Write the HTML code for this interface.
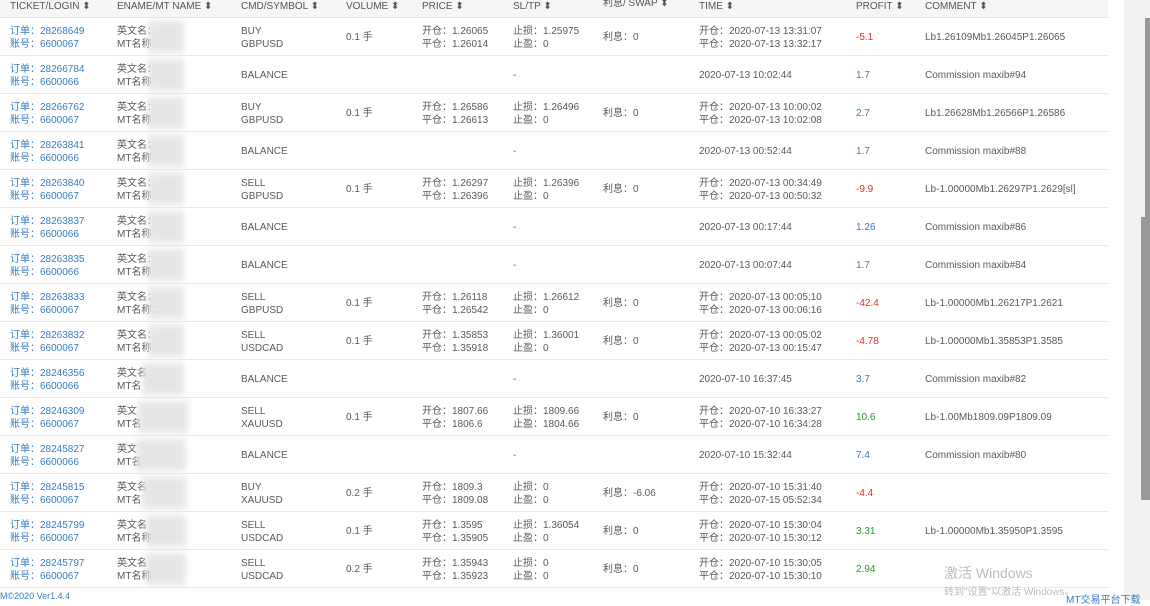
<!DOCTYPE html>
<html><head><meta charset="utf-8"><style>
*{margin:0;padding:0;box-sizing:border-box}
body{width:1150px;height:600px;overflow:hidden;background:#fff;font-family:"Liberation Sans","Noto Sans CJK SC",sans-serif;font-size:10px;color:#5a5a5a;position:relative}
.side{position:absolute;left:1124px;top:0;width:26px;height:600px;background:#f2f2f2}
.sb1{position:absolute;left:1145px;top:18px;width:5px;height:200px;background:#999}
.sb2{position:absolute;left:1141px;top:217px;width:9px;height:283px;background:#999}
.hdr{position:absolute;left:0;top:0;width:1108px;height:18px;background:#f6f6f6;border-bottom:1px solid #e6e6e6}
.hdr span{position:absolute;top:1px;font-size:10px;color:#555;white-space:nowrap}
.row{position:absolute;left:0;width:1108px;height:38px;border-bottom:1px solid #e8e8e8}
.c{position:absolute;top:7px;line-height:13px;white-space:nowrap}
.m{top:13px}
.b{color:#3a7cc0}.r{color:#e03030}.g{color:#22a022}
.blur{position:absolute;left:148px;top:3px;width:36px;height:32px;background:#e2e2e2;filter:blur(3px);opacity:.85}
.c1{left:10px}.c2{left:117px}.c3{left:241px}.c4{left:346px}.c5{left:422px}.c6{left:513px}.c7{left:603px}.c8{left:699px}.c9{left:856px}.c10{left:925px}
</style></head><body>
<div class="side"></div><div class="sb1"></div><div class="sb2"></div>
<div class="hdr">
<span style="left:10px">TICKET/LOGIN ⬍</span><span style="left:117px">ENAME/MT NAME ⬍</span><span style="left:241px">CMD/SYMBOL ⬍</span><span style="left:346px">VOLUME ⬍</span><span style="left:422px">PRICE ⬍</span><span style="left:513px">SL/TP ⬍</span><span style="left:603px;top:-6px">利息/ SWAP ⬍</span><span style="left:699px">TIME ⬍</span><span style="left:856px">PROFIT ⬍</span><span style="left:925px">COMMENT ⬍</span>
</div>

<div class="row" style="top:18px"><div class="c c1 b">订单：28268649<br>账号：6600067</div><div class="c c2">英文名：<br>MT名称</div><div class="blur"></div><div class="c c3">BUY<br>GBPUSD</div><div class="c c4 m">0.1 手</div><div class="c c5">开仓：1.26065<br>平仓：1.26014</div><div class="c c6">止损：1.25975<br>止盈：0</div><div class="c c7 m">利息：0</div><div class="c c8">开仓：2020-07-13 13:31:07<br>平仓：2020-07-13 13:32:17</div><div class="c c9 m r">-5.1</div><div class="c c10 m">Lb1.26109Mb1.26045P1.26065</div></div>

<div class="row" style="top:56px"><div class="c c1 b">订单：28266784<br>账号：6600066</div><div class="c c2">英文名：<br>MT名称</div><div class="blur"></div><div class="c c3 m">BALANCE</div><div class="c c6 m">-</div><div class="c c8 m">2020-07-13 10:02:44</div><div class="c c9 m b">1.7</div><div class="c c10 m">Commission maxib#94</div></div>

<div class="row" style="top:94px"><div class="c c1 b">订单：28266762<br>账号：6600067</div><div class="c c2">英文名：<br>MT名称</div><div class="blur"></div><div class="c c3">BUY<br>GBPUSD</div><div class="c c4 m">0.1 手</div><div class="c c5">开仓：1.26586<br>平仓：1.26613</div><div class="c c6">止损：1.26496<br>止盈：0</div><div class="c c7 m">利息：0</div><div class="c c8">开仓：2020-07-13 10:00:02<br>平仓：2020-07-13 10:02:08</div><div class="c c9 m g">2.7</div><div class="c c10 m">Lb1.26628Mb1.26566P1.26586</div></div>

<div class="row" style="top:132px"><div class="c c1 b">订单：28263841<br>账号：6600066</div><div class="c c2">英文名：<br>MT名称</div><div class="blur"></div><div class="c c3 m">BALANCE</div><div class="c c6 m">-</div><div class="c c8 m">2020-07-13 00:52:44</div><div class="c c9 m b">1.7</div><div class="c c10 m">Commission maxib#88</div></div>

<div class="row" style="top:170px"><div class="c c1 b">订单：28263840<br>账号：6600067</div><div class="c c2">英文名：<br>MT名称</div><div class="blur"></div><div class="c c3">SELL<br>GBPUSD</div><div class="c c4 m">0.1 手</div><div class="c c5">开仓：1.26297<br>平仓：1.26396</div><div class="c c6">止损：1.26396<br>止盈：0</div><div class="c c7 m">利息：0</div><div class="c c8">开仓：2020-07-13 00:34:49<br>平仓：2020-07-13 00:50:32</div><div class="c c9 m r">-9.9</div><div class="c c10 m">Lb-1.00000Mb1.26297P1.2629[sl]</div></div>

<div class="row" style="top:208px"><div class="c c1 b">订单：28263837<br>账号：6600066</div><div class="c c2">英文名：<br>MT名称</div><div class="blur"></div><div class="c c3 m">BALANCE</div><div class="c c6 m">-</div><div class="c c8 m">2020-07-13 00:17:44</div><div class="c c9 m b">1.26</div><div class="c c10 m">Commission maxib#86</div></div>

<div class="row" style="top:246px"><div class="c c1 b">订单：28263835<br>账号：6600066</div><div class="c c2">英文名：<br>MT名称：</div><div class="blur"></div><div class="c c3 m">BALANCE</div><div class="c c6 m">-</div><div class="c c8 m">2020-07-13 00:07:44</div><div class="c c9 m b">1.7</div><div class="c c10 m">Commission maxib#84</div></div>

<div class="row" style="top:284px"><div class="c c1 b">订单：28263833<br>账号：6600067</div><div class="c c2">英文名：<br>MT名称：</div><div class="blur"></div><div class="c c3">SELL<br>GBPUSD</div><div class="c c4 m">0.1 手</div><div class="c c5">开仓：1.26118<br>平仓：1.26542</div><div class="c c6">止损：1.26612<br>止盈：0</div><div class="c c7 m">利息：0</div><div class="c c8">开仓：2020-07-13 00:05:10<br>平仓：2020-07-13 00:06:16</div><div class="c c9 m r">-42.4</div><div class="c c10 m">Lb-1.00000Mb1.26217P1.2621</div></div>

<div class="row" style="top:322px"><div class="c c1 b">订单：28263832<br>账号：6600067</div><div class="c c2">英文名：<br>MT名称</div><div class="blur"></div><div class="c c3">SELL<br>USDCAD</div><div class="c c4 m">0.1 手</div><div class="c c5">开仓：1.35853<br>平仓：1.35918</div><div class="c c6">止损：1.36001<br>止盈：0</div><div class="c c7 m">利息：0</div><div class="c c8">开仓：2020-07-13 00:05:02<br>平仓：2020-07-13 00:15:47</div><div class="c c9 m r">-4.78</div><div class="c c10 m">Lb-1.00000Mb1.35853P1.3585</div></div>

<div class="row" style="top:360px"><div class="c c1 b">订单：28246356<br>账号：6600066</div><div class="c c2">英文名<br>MT名</div><div class="blur" style="left:142px;width:42px"></div><div class="c c3 m">BALANCE</div><div class="c c6 m">-</div><div class="c c8 m">2020-07-10 16:37:45</div><div class="c c9 m b">3.7</div><div class="c c10 m">Commission maxib#82</div></div>

<div class="row" style="top:398px"><div class="c c1 b">订单：28246309<br>账号：6600067</div><div class="c c2">英文<br>MT名</div><div class="blur" style="left:138px;width:50px"></div><div class="c c3">SELL<br>XAUUSD</div><div class="c c4 m">0.1 手</div><div class="c c5">开仓：1807.66<br>平仓：1806.6</div><div class="c c6">止损：1809.66<br>止盈：1804.66</div><div class="c c7 m">利息：0</div><div class="c c8">开仓：2020-07-10 16:33:27<br>平仓：2020-07-10 16:34:28</div><div class="c c9 m g">10.6</div><div class="c c10 m">Lb-1.00Mb1809.09P1809.09</div></div>

<div class="row" style="top:436px"><div class="c c1 b">订单：28245827<br>账号：6600066</div><div class="c c2">英文<br>MT名</div><div class="blur" style="left:136px;width:50px"></div><div class="c c3 m">BALANCE</div><div class="c c6 m">-</div><div class="c c8 m">2020-07-10 15:32:44</div><div class="c c9 m b">7.4</div><div class="c c10 m">Commission maxib#80</div></div>

<div class="row" style="top:474px"><div class="c c1 b">订单：28245815<br>账号：6600067</div><div class="c c2">英文名<br>MT名</div><div class="blur" style="left:142px;width:44px"></div><div class="c c3">BUY<br>XAUUSD</div><div class="c c4 m">0.2 手</div><div class="c c5">开仓：1809.3<br>平仓：1809.08</div><div class="c c6">止损：0<br>止盈：0</div><div class="c c7 m">利息：-6.06</div><div class="c c8">开仓：2020-07-10 15:31:40<br>平仓：2020-07-15 05:52:34</div><div class="c c9 m r">-4.4</div></div>

<div class="row" style="top:512px"><div class="c c1 b">订单：28245799<br>账号：6600067</div><div class="c c2">英文名<br>MT名称</div><div class="blur" style="left:146px;width:40px"></div><div class="c c3">SELL<br>USDCAD</div><div class="c c4 m">0.1 手</div><div class="c c5">开仓：1.3595<br>平仓：1.35905</div><div class="c c6">止损：1.36054<br>止盈：0</div><div class="c c7 m">利息：0</div><div class="c c8">开仓：2020-07-10 15:30:04<br>平仓：2020-07-10 15:30:12</div><div class="c c9 m g">3.31</div><div class="c c10 m">Lb-1.00000Mb1.35950P1.3595</div></div>

<div class="row" style="top:550px"><div class="c c1 b">订单：28245797<br>账号：6600067</div><div class="c c2">英文名<br>MT名称</div><div class="blur" style="left:146px;width:40px"></div><div class="c c3">SELL<br>USDCAD</div><div class="c c4 m">0.2 手</div><div class="c c5">开仓：1.35943<br>平仓：1.35923</div><div class="c c6">止损：0<br>止盈：0</div><div class="c c7 m">利息：0</div><div class="c c8">开仓：2020-07-10 15:30:05<br>平仓：2020-07-10 15:30:10</div><div class="c c9 m g">2.94</div></div>

<div style="position:absolute;left:944px;top:563px;font-size:14px;color:#bbb;white-space:nowrap">激活 Windows</div>
<div style="position:absolute;left:944px;top:583px;font-size:10px;color:#bbb;white-space:nowrap">转到"设置"以激活 Windows。</div>
<div style="position:absolute;left:0;top:591px;font-size:9px;color:#3a7cc0;white-space:nowrap">M©2020 Ver1.4.4</div>
<div style="position:absolute;left:1066px;top:591px;font-size:10px;color:#3a7cc0;white-space:nowrap">MT交易平台下载</div>
</body></html>
